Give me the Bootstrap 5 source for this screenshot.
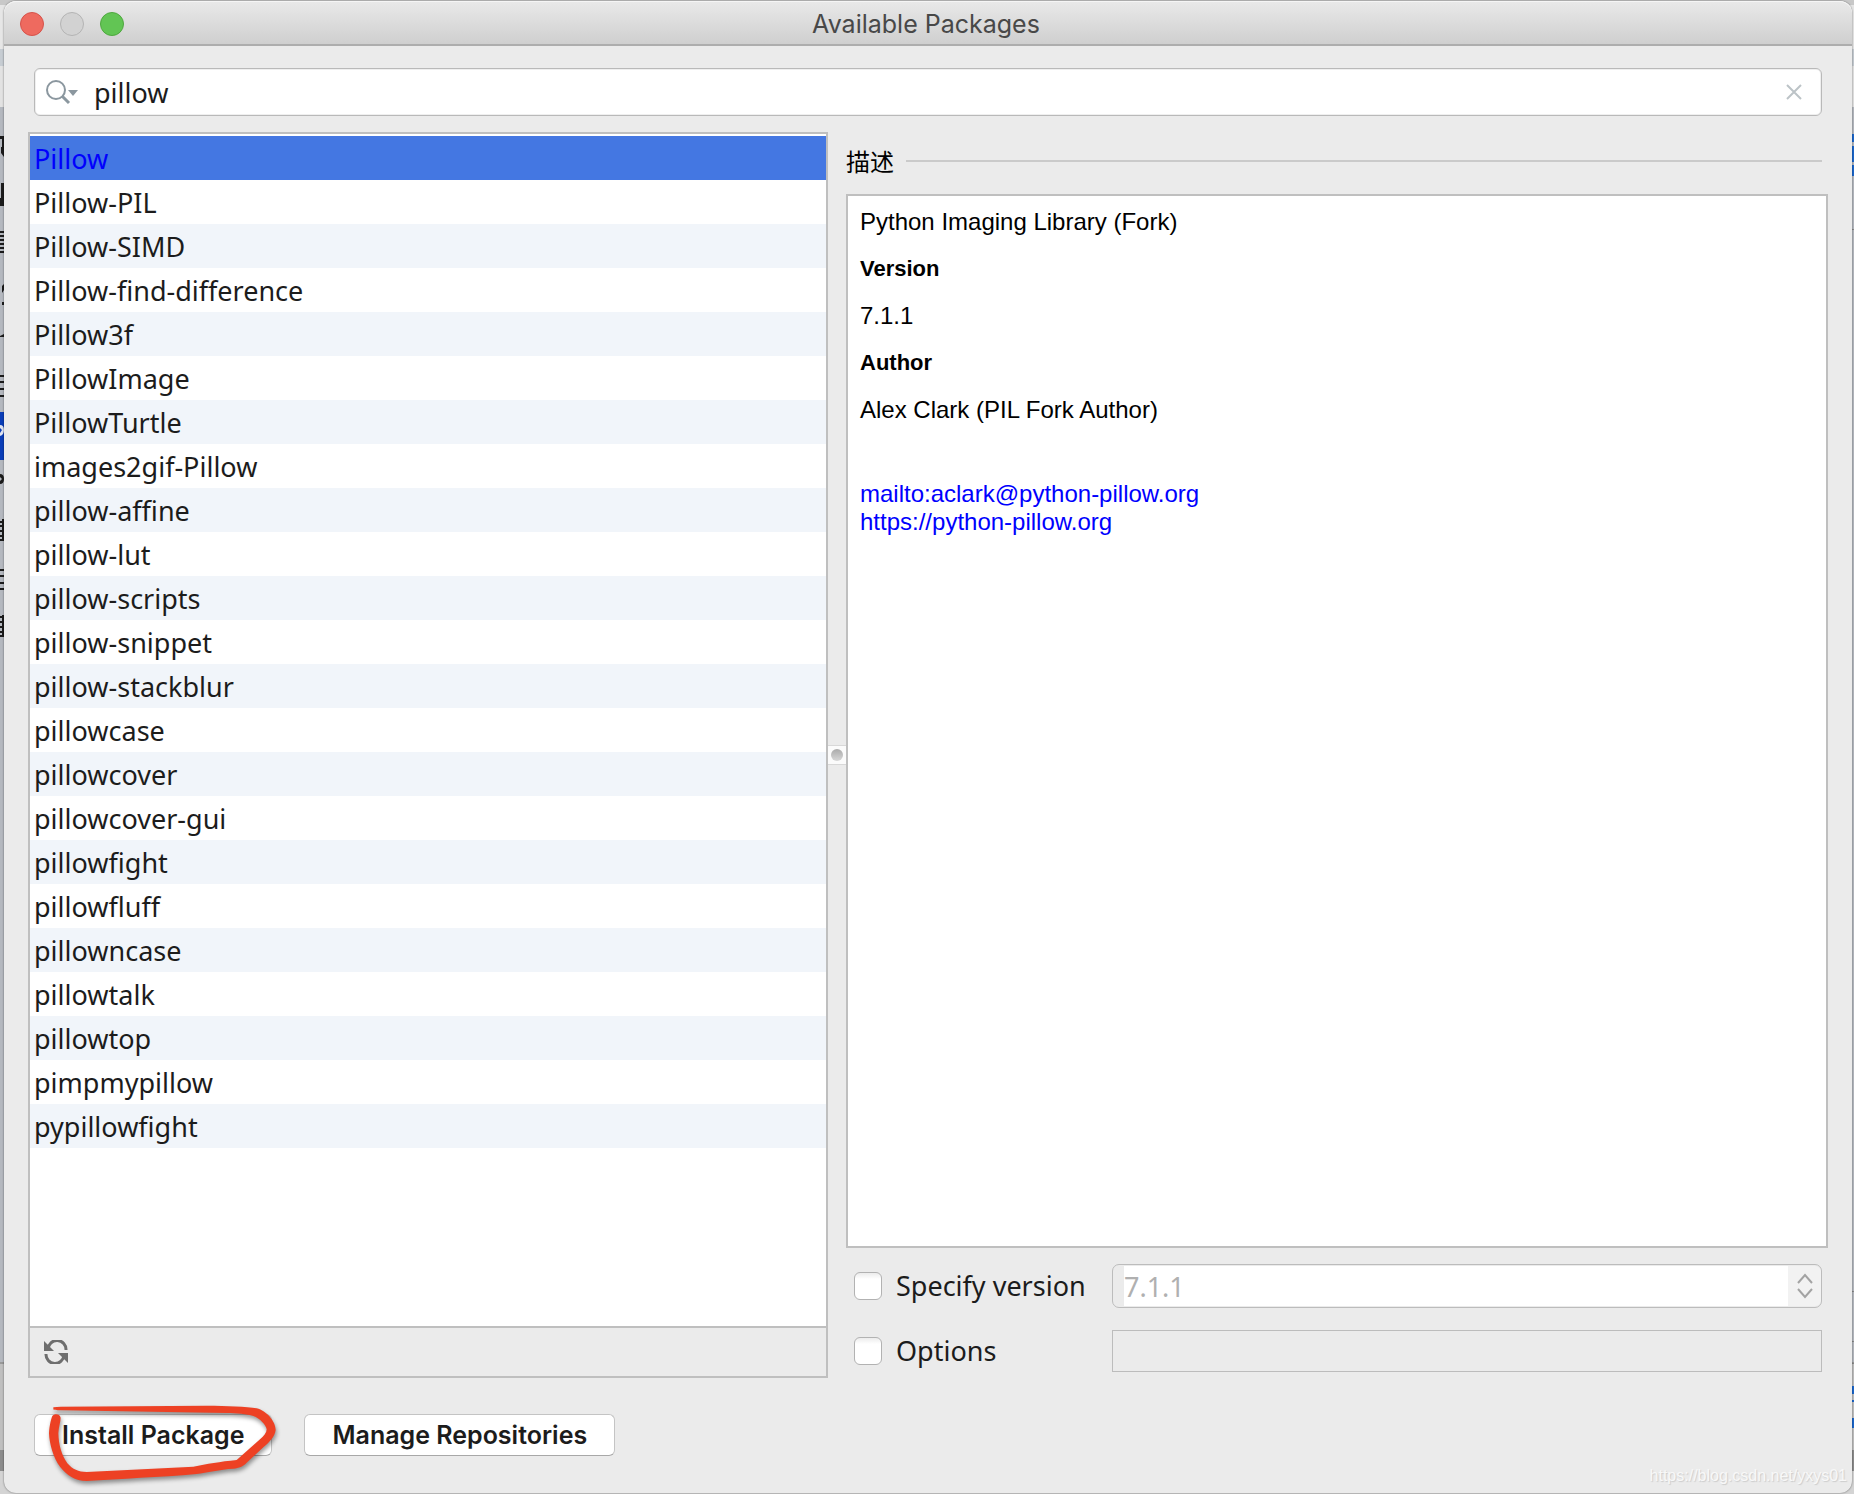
<!DOCTYPE html>
<html lang="zh">
<head>
<meta charset="utf-8">
<meta name="viewport" content="width=device-width, initial-scale=1">
<title>Available Packages</title>
<link href="https://cdn.jsdelivr.net/npm/bootstrap@5.3.0/dist/css/bootstrap.min.css" rel="stylesheet">
<style>
  :root { --line: #bfbfbf; --pane: #ebebeb; }
  body {
    font-family: "Noto Sans", "Noto Sans CJK SC", sans-serif;
    font-size: 27px; line-height: 36px; color: #1c1c1c;
    background: linear-gradient(#c8c8c8 5px, #e6e6e6 5px 49px, #c6ccd2 49px 66px, #e2e2e2 66px 107px, #b4b8bf 107px 1362px, #999 1362px 1364px, #bfbfbf 1364px 1450px, #8c8c8c 1450px 1471px, #d4d4d4 1471px);
  }
  .desktop { padding: 1px 2px 1px 4px; }
  .dialog-window { background: var(--pane); border-radius: 12px; box-shadow: 0 0 2px rgba(0,0,0,.55); }
  .title-bar {
    height: 45px; padding: 2px 20px 0 16px; border-radius: 12px 12px 0 0;
    background: linear-gradient(#e9e9e9, #cfcfcf); border-bottom: 2px solid #adadad;
    box-shadow: inset 0 1px 0 #f5f5f5;
  }
  .title-bar h1 { font: 400 25px/30px Inter, sans-serif; color: #484848; }
  .light { width: 24px; height: 24px; border-radius: 50%; border: 1px solid #b4b4b4; background: #d2d2d2; padding: 0; }
  .light-red { background: #ee6a5f; border-color: #d6524a; }
  .light-green { background: #62c554; border-color: #4fa83f; }
  .lights { gap: 16px; flex: 1 0 0; }
  .search-box {
    margin: 22px 30px 16px; height: 48px; background: #fff; border: 1px solid #b9b9b9;
    border-radius: 6px; padding: 0 19px 0 10px; box-shadow: inset 0 0 0 1px #efefef;
  }
  .search-box input { border: 0; outline: 0; background: none; color: inherit; padding: 0; margin-left: 15px; height: 44px; }
  .plain-btn { border: 0; background: none; padding: 0; display: flex; }
  .panes { padding: 0 24px; }
  .list-pane { flex: 796 1 0; min-width: 0; border: 2px solid var(--line); background: #fff; }
  .package-list { padding-top: 2px; }
  .package-list .list-group-item {
    border: 0; height: 44px; padding: 5px 4px 3px; background: #fff; color: inherit;
    white-space: nowrap; overflow: hidden; border-radius: 0;
  }
  .package-list .list-group-item:nth-child(odd) { background: #f1f5fa; }
  .package-list .list-group-item.active { background: #4477e2; color: #0000fe; margin: 0; }
  .list-tools { height: 50px; border-top: 2px solid var(--line); background: var(--pane); padding-left: 14px; }
  .splitter { width: 18px; }
  .grip { height: 20px; background: #fbfbfb; border: solid #d8d8d8; border-width: 1px 0; }
  .grip-dot { width: 12px; height: 12px; border-radius: 50%; background: linear-gradient(#aaa, #d8d8d8); }
  .info-pane { flex: 982 1 0; min-width: 0; padding-bottom: 6px; }
  .section-head { height: 58px; margin-bottom: 4px; gap: 12px; padding-right: 6px; }
  .section-head h2 { font: 400 24px/36px "Noto Sans CJK SC", sans-serif; color: #000; }
  .section-head hr { border-top: 2px solid #cacaca; opacity: 1; }
  .description {
    border: 2px solid var(--line); background: #fff; padding: 12px 12px; color: #000;
    font: 24px/28px "Liberation Sans", sans-serif;
  }
  .description p { margin-bottom: 19px; }
  .description .field-name { font-size: 22px; font-weight: 700; }
  .description .links { margin-top: 56px; }
  .description a { color: #0000fe; text-decoration: none; display: block; }
  .option-row { padding: 0 6px 0 8px; }
  .option-row + .option-row { margin-top: 22px; }
  .option-label { width: 258px; gap: 14px; }
  .tick {
    appearance: none; width: 28px; height: 28px; margin: 0; border: 1px solid #b2b2b2; border-radius: 6px;
    background: linear-gradient(#ececec, #fff 6px);
  }
  .version-box { height: 44px; border: 1px solid #bcbcbc; border-radius: 7px; padding: 1px 0 1px 11px; }
  .version-box select {
    appearance: none; border: 0; border-radius: 0; background: #fff; color: #b0b0b0; opacity: 1; padding: 2px 0 0; height: 40px; min-width: 0;
  }
  .version-box .arrows { width: 33px; background: #f2f2f2; border-radius: 0 6px 6px 0; }
  .options-box { height: 42px; border: 1px solid #bcbcbc; background: var(--pane); padding: 0 8px; min-width: 0; }
  .actions { padding: 36px 30px 37px; gap: 32px; }
  .push-btn {
    height: 42px; padding: 0 27px; background: #fff; border: 1px solid #c4c4c4; border-bottom-color: #a8a8a8;
    border-radius: 6px; font: 600 25px/36px Inter, sans-serif; color: #1c1c1c;
  }
  .scribble { position: absolute; left: 6px; top: -14px; filter: drop-shadow(1px 3px 2px rgba(0,0,0,.4)); pointer-events: none; }
  .edge { position: absolute; top: 0; }
  .watermark {
    position: absolute; right: 5px; bottom: 5px; font: 16px/24px "Liberation Sans", sans-serif;
    color: #f8f8f8; text-shadow: 1px 1px 1px #ccc;
  }
</style>
</head>
<body>
<div class="desktop min-vh-100 d-flex position-relative">
  <!-- edges of the windows lying behind the dialog -->
  <svg class="edge start-0" width="4" height="700" aria-hidden="true">
    <path fill="#1b1b1b" d="M0 136h4v3H0zM2 139h2v18l-3-4v-6h1zM1 183h3v23H0v-8h1zM2 286l2-2v6l-2 3zM2 302h2v3H2zM0 336l4-2v3H0zM0 474q4 0 4 5t-4 5v-3l2-2-2-2z"/>
    <path stroke="#1b1b1b" stroke-width="2" d="M0 232h4M0 236h4M0 240h4M0 244h4M0 248h4M0 252h4M0 376h4M0 382h4M0 389h4M0 396h4M0 522h4M0 526h4M0 531h4M0 536h4M0 540h4M0 570h4M0 576h4M0 583h4M0 589h4M0 617h4M0 622h4M0 627h4M0 632h4M0 636h4"/>
    <path stroke="#1b1b1b" stroke-width="2" d="M3 519v22M3 615v22"/>
    <path fill="#0a3db8" d="M0 412h4v48H0z"/>
    <path fill="#dfe4f2" d="M0 425q4 0 4 5t-4 6v-3l2-3-2-2z"/>
  </svg>
  <svg class="edge end-0" width="2" height="1494" aria-hidden="true">
    <path fill="#1a66cc" d="M0 134h2v8H0zM0 146h2v16H0zM0 165h2v11H0zM0 1386h2v8H0zM0 1400h2v2H0zM0 1418h2v10H0z"/>
    <path fill="#888" d="M0 229h2v1H0zM0 1291h2v1H0zM0 1341h2v1H0zM0 1363h2v1H0z"/>
  </svg>

  <main class="dialog-window flex-fill d-flex flex-column position-relative">
    <header class="title-bar d-flex align-items-center">
      <div class="lights d-flex">
        <button class="light light-red" type="button" aria-label="Close"></button>
        <button class="light" type="button" aria-label="Minimize" disabled></button>
        <button class="light light-green" type="button" aria-label="Zoom"></button>
      </div>
      <h1 class="m-0">Available Packages</h1>
      <div class="lights"></div>
    </header>

    <div class="search-box d-flex align-items-center">
      <button class="plain-btn" type="button" aria-label="Search history">
        <svg width="34" height="26" viewBox="0 0 34 26" fill="none">
          <circle cx="11" cy="11" r="9" stroke="#8b979f" stroke-width="2"/>
          <path d="M17 17l7 7" stroke="#8b979f" stroke-width="3"/>
          <path d="M23 11h10l-5 6z" fill="#8b979f"/>
        </svg>
      </button>
      <input class="flex-fill" type="text" value="pillow" aria-label="Search packages">
      <button class="plain-btn" type="button" aria-label="Clear">
        <svg width="16" height="16" viewBox="0 0 16 16"><path d="M1 1l14 14M15 1L1 15" stroke="#bcc3c7" stroke-width="2"/></svg>
      </button>
    </div>

    <div class="panes d-flex flex-fill">
      <section class="list-pane d-flex flex-column">
        <ul class="package-list list-group list-group-flush flex-fill">
          <li class="list-group-item active">Pillow</li>
          <li class="list-group-item">Pillow-PIL</li>
          <li class="list-group-item">Pillow-SIMD</li>
          <li class="list-group-item">Pillow-find-difference</li>
          <li class="list-group-item">Pillow3f</li>
          <li class="list-group-item">PillowImage</li>
          <li class="list-group-item">PillowTurtle</li>
          <li class="list-group-item">images2gif-Pillow</li>
          <li class="list-group-item">pillow-affine</li>
          <li class="list-group-item">pillow-lut</li>
          <li class="list-group-item">pillow-scripts</li>
          <li class="list-group-item">pillow-snippet</li>
          <li class="list-group-item">pillow-stackblur</li>
          <li class="list-group-item">pillowcase</li>
          <li class="list-group-item">pillowcover</li>
          <li class="list-group-item">pillowcover-gui</li>
          <li class="list-group-item">pillowfight</li>
          <li class="list-group-item">pillowfluff</li>
          <li class="list-group-item">pillowncase</li>
          <li class="list-group-item">pillowtalk</li>
          <li class="list-group-item">pillowtop</li>
          <li class="list-group-item">pimpmypillow</li>
          <li class="list-group-item">pypillowfight</li>
        </ul>
        <div class="list-tools d-flex align-items-center">
          <button class="plain-btn" type="button" aria-label="Reload packages">
            <svg width="24" height="24" viewBox="0 0 24 24" fill="none">
              <path d="M4 9A9 9 0 0 1 22 10" stroke="#6e6e6e" stroke-width="3"/>
              <path d="M0 1v10h10z" fill="#6e6e6e"/>
              <path d="M20 15A9 9 0 0 1 2 14" stroke="#6e6e6e" stroke-width="3"/>
              <path d="M24 23V13H14z" fill="#6e6e6e"/>
            </svg>
          </button>
        </div>
      </section>

      <div class="splitter d-flex flex-column justify-content-center">
        <div class="grip d-flex align-items-center justify-content-center"><span class="grip-dot"></span></div>
      </div>

      <section class="info-pane d-flex flex-column">
        <div class="section-head d-flex align-items-center">
          <h2 class="m-0">描述</h2>
          <hr class="flex-fill m-0">
        </div>
        <div class="description flex-fill">
          <p>Python Imaging Library (Fork)</p>
          <p class="field-name">Version</p>
          <p>7.1.1</p>
          <p class="field-name">Author</p>
          <p>Alex Clark (PIL Fork Author)</p>
          <div class="links">
            <a href="mailto:aclark@python-pillow.org">mailto:aclark@python-pillow.org</a>
            <a href="https://python-pillow.org">https://python-pillow.org</a>
          </div>
        </div>
        <div class="option-row d-flex align-items-center mt-3">
          <div class="option-label d-flex align-items-center">
            <input class="tick" type="checkbox" id="specify">
            <label for="specify">Specify version</label>
          </div>
          <div class="version-box d-flex flex-fill">
            <select class="flex-fill" aria-label="Version" disabled><option>7.1.1</option></select>
            <span class="arrows d-flex align-items-center justify-content-center">
              <svg width="16" height="26" viewBox="0 0 16 26" fill="none" stroke="#a3a3a3" stroke-width="2"><path d="M1 10l7-8 7 8M1 16l7 8 7-8"/></svg>
            </span>
          </div>
        </div>
        <div class="option-row d-flex align-items-center">
          <div class="option-label d-flex align-items-center">
            <input class="tick" type="checkbox" id="options">
            <label for="options">Options</label>
          </div>
          <input class="options-box flex-fill" type="text" aria-label="Options" disabled>
        </div>
      </section>
    </div>

    <footer class="actions d-flex">
      <div class="position-relative">
        <button class="push-btn" type="button">Install Package</button>
        <svg class="scribble" width="250" height="94" viewBox="0 0 750 282" aria-hidden="true">
          <path fill="#ed4124" d="M40 22L62 20 500 17C560 17 620 20 650 25 680 32 707 65 707 90 704 110 690 125 670 142L620 188C608 200 598 204 580 206 540 208 500 218 470 222 360 232 240 236 140 243 105 243 80 225 60 200 40 175 28 130 27 100 28 80 32 60 37 48 42 40 60 40 62 53 62 65 56 80 55 100 56 135 65 165 82 190 98 208 115 216 140 216L460 200C500 192 540 185 590 180L660 118C672 108 680 98 680 88 678 75 660 55 640 48 620 42 590 40 560 39L62 31C50 31 40 30 40 28Z"/>
        </svg>
      </div>
      <button class="push-btn" type="button">Manage Repositories</button>
    </footer>
    <span class="watermark">https://blog.csdn.net/yxys01</span>
  </main>
</div>
<script src="https://cdn.jsdelivr.net/npm/bootstrap@5.3.0/dist/js/bootstrap.bundle.min.js"></script>
</body>
</html>
